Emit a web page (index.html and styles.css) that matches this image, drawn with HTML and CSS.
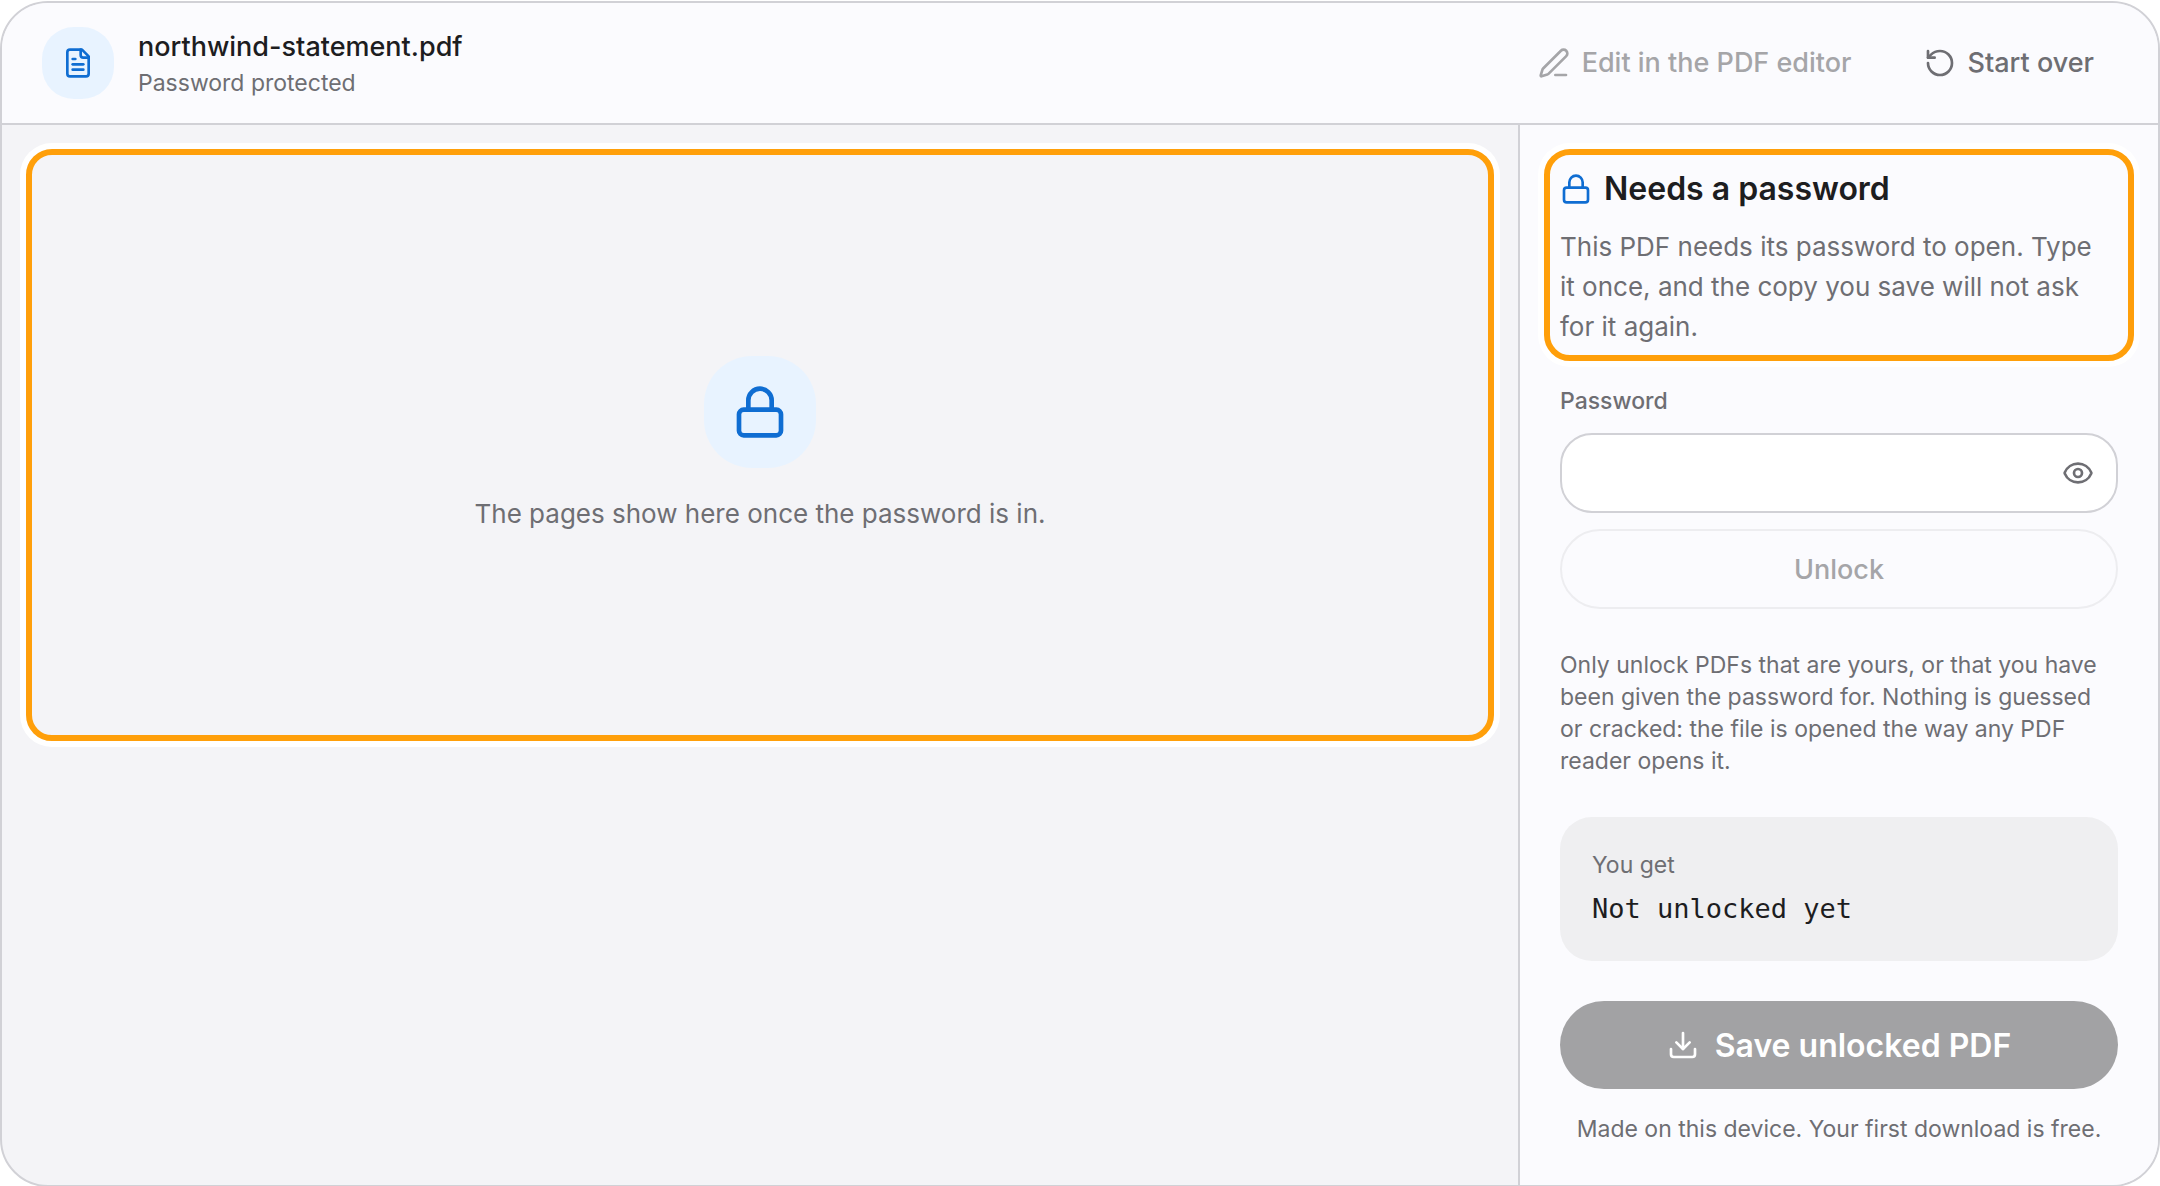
FILE: index.html
```html
<!DOCTYPE html>
<html lang="en">
<head>
<meta charset="utf-8">
<title>Unlock PDF</title>
<link rel="stylesheet" href="styles.css">
</head>
<body>
<div class="app">
  <header class="topbar">
    <div class="file-badge">
      <svg class="icon" viewBox="0 0 24 24" aria-hidden="true"><path d="M15 2H6a2 2 0 0 0-2 2v16a2 2 0 0 0 2 2h12a2 2 0 0 0 2-2V7Z"/><path d="M14 2v4a2 2 0 0 0 2 2h4"/><path d="M10 9H8"/><path d="M16 13H8"/><path d="M16 17H8"/></svg>
    </div>
    <div class="file-info">
      <h1 class="file-name">northwind-statement.pdf</h1>
      <p class="file-state">Password protected</p>
    </div>
    <div class="actions">
      <button class="action" type="button" disabled>
        <svg class="icon" viewBox="0 0 24 24" aria-hidden="true"><path d="M13 21h8"/><path d="M21.174 6.812a1 1 0 0 0-3.986-3.987L3.842 16.174a2 2 0 0 0-.5.83l-1.321 4.352a.5.5 0 0 0 .623.622l4.353-1.32a2 2 0 0 0 .83-.497z"/></svg>
        Edit in the PDF editor
      </button>
      <button class="action" type="button">
        <svg class="icon" viewBox="0 0 24 24" aria-hidden="true"><path d="M3 12a9 9 0 1 0 9-9 9.75 9.75 0 0 0-6.74 2.74L3 8"/><path d="M3 3v5h5"/></svg>
        Start over
      </button>
    </div>
  </header>
  <div class="workspace">
    <main class="viewer">
      <section class="preview highlight">
        <div class="lock-badge">
          <svg class="icon icon-large" viewBox="0 0 24 24" aria-hidden="true"><rect x="3" y="11" width="18" height="11" rx="2"/><path d="M7 11V7a5 5 0 0 1 10 0v4"/></svg>
        </div>
        <p class="body-text">The pages show here once the password is in.</p>
      </section>
    </main>
    <aside class="panel">
      <section class="notice highlight">
        <h2 class="notice-title">
          <svg class="icon" viewBox="0 0 24 24" aria-hidden="true"><rect x="3" y="11" width="18" height="11" rx="2"/><path d="M7 11V7a5 5 0 0 1 10 0v4"/></svg>
          Needs a password
        </h2>
        <p class="body-text">This PDF needs its password to open. Type it once, and the copy you save will not ask for it again.</p>
      </section>
      <form class="unlock-form">
        <label class="field-label" for="password">Password</label>
        <div class="field">
          <input class="field-input" id="password" type="password">
          <button class="reveal" type="button" aria-label="Show password">
            <svg class="icon" viewBox="0 0 24 24" aria-hidden="true"><path d="M2.062 12.348a1 1 0 0 1 0-.696 10.75 10.75 0 0 1 19.876 0 1 1 0 0 1 0 .696 10.75 10.75 0 0 1-19.876 0"/><circle cx="12" cy="12" r="3"/></svg>
          </button>
        </div>
        <button class="unlock" type="submit" disabled>Unlock</button>
      </form>
      <p class="fine-print">Only unlock PDFs that are yours, or that you have been given the password for. Nothing is guessed or cracked: the file is opened the way any PDF reader opens it.</p>
      <section class="result">
        <p class="result-label">You get</p>
        <p class="result-value">Not unlocked yet</p>
      </section>
      <button class="save" type="button" disabled>
        <svg class="icon" viewBox="0 0 24 24" aria-hidden="true"><path d="M12 15V3"/><path d="M21 15v4a2 2 0 0 1-2 2H5a2 2 0 0 1-2-2v-4"/><path d="m7 10 5 5 5-5"/></svg>
        Save unlocked PDF
      </button>
      <p class="footnote">Made on this device. Your first download is free.</p>
    </aside>
  </div>
</div>
</body>
</html>
```
FILE: styles.css
```css
:root {
  --line: #d1d1d6;
  --ink: #1d1d1f;
  --muted: #6e6e73;
  --blue: #0f6dd2;
  --tint: #e8f3ff;
  --surface: #fbfbfe;
}

*, *::before, *::after { box-sizing: border-box; }

body {
  margin: 0;
  height: 100vh;
  padding-top: 1px;
  overflow: hidden;
  background: #fff;
  color: var(--ink);
  font-family: Inter, "Liberation Sans", sans-serif;
}

h1, h2, p { margin: 0; }

button, input { font: inherit; color: inherit; }

button {
  display: flex;
  align-items: center;
  justify-content: center;
  margin: 0;
  padding: 0;
  border: 0;
  background: none;
}

.app {
  display: flex;
  flex-direction: column;
  min-height: 100vh;
  border: 2px solid var(--line);
  border-radius: 48px;
  overflow: hidden;
  background: #f4f4f7;
}

.icon {
  flex: none;
  width: 32px;
  height: 32px;
  fill: none;
  stroke: currentColor;
  stroke-width: 2;
  stroke-linecap: round;
  stroke-linejoin: round;
}

.icon-large { width: 56px; height: 56px; }

.topbar {
  display: flex;
  align-items: center;
  gap: 24px;
  padding: 24px 64px 24px 40px;
  border-bottom: 2px solid var(--line);
  background: var(--surface);
}

.file-badge, .lock-badge {
  display: grid;
  place-items: center;
  background: var(--tint);
  color: var(--blue);
}

.file-badge { width: 72px; height: 72px; border-radius: 32px; }
.lock-badge { width: 112px; height: 112px; border-radius: 48px; }

.file-name { font-size: 27px; line-height: 40px; font-weight: 500; }
.file-state { font-size: 23px; line-height: 32px; color: var(--muted); }

.actions {
  display: flex;
  gap: 72px;
  margin-left: auto;
}

.action {
  gap: 12px;
  font-size: 27px;
  line-height: 40px;
  font-weight: 500;
  color: var(--muted);
}

.action:disabled { color: #a5a5a8; }

.workspace {
  flex: 1;
  display: grid;
  grid-template-columns: minmax(0, 1fr) 640px;
}

.viewer { padding: 24px; }

.highlight {
  border: 6px solid #ff9f0a;
  border-radius: 26px;
  box-shadow: 0 0 0 6px #fff;
}

.preview {
  display: flex;
  flex-direction: column;
  align-items: center;
  justify-content: center;
  gap: 26px;
  min-height: 592px;
}

.body-text {
  font-size: 26px;
  line-height: 40px;
  color: var(--muted);
}

.panel {
  display: flex;
  flex-direction: column;
  padding: 24px 40px;
  border-left: 2px solid var(--line);
  background: var(--surface);
}

.notice {
  display: flex;
  flex-direction: column;
  gap: 18px;
  margin: 0 -16px;
  padding: 14px 10px 8px;
}

.notice-title {
  display: flex;
  align-items: center;
  gap: 12px;
  font-size: 32px;
  line-height: 40px;
  font-weight: 600;
}

.notice-title .icon { color: var(--blue); }

.notice .body-text { padding-right: 24px; }

.unlock-form {
  display: flex;
  flex-direction: column;
  gap: 16px;
  margin-top: 24px;
}

.field-label {
  font-size: 23px;
  line-height: 32px;
  font-weight: 500;
  color: var(--muted);
}

.field {
  display: flex;
  align-items: center;
  height: 80px;
  padding: 0 22px;
  border: 2px solid var(--line);
  border-radius: 32px;
  background: #fff;
}

.field-input {
  flex: 1;
  min-width: 0;
  border: 0;
  outline: 0;
  background: none;
  font-size: 27px;
}

.reveal { color: var(--muted); }

.unlock {
  height: 80px;
  border: 2px solid #ededf0;
  border-radius: 40px;
  font-size: 27px;
  font-weight: 500;
  color: #a5a5a8;
}

.fine-print {
  margin-top: 40px;
  font-size: 23px;
  line-height: 32px;
  color: var(--muted);
}

.result {
  display: flex;
  flex-direction: column;
  gap: 8px;
  margin-top: 40px;
  padding: 32px;
  border-radius: 32px;
  background: #efeff1;
}

.result-label {
  font-size: 23px;
  line-height: 32px;
  color: var(--muted);
}

.result-value {
  font-family: "DejaVu Sans Mono", monospace;
  font-size: 27px;
  line-height: 40px;
}

.save {
  gap: 16px;
  height: 88px;
  margin-top: 40px;
  border-radius: 44px;
  background: #a2a2a4;
  font-size: 32px;
  font-weight: 600;
  color: #fff;
}

.footnote {
  margin-top: 24px;
  font-size: 23px;
  line-height: 32px;
  text-align: center;
  color: var(--muted);
}
```
